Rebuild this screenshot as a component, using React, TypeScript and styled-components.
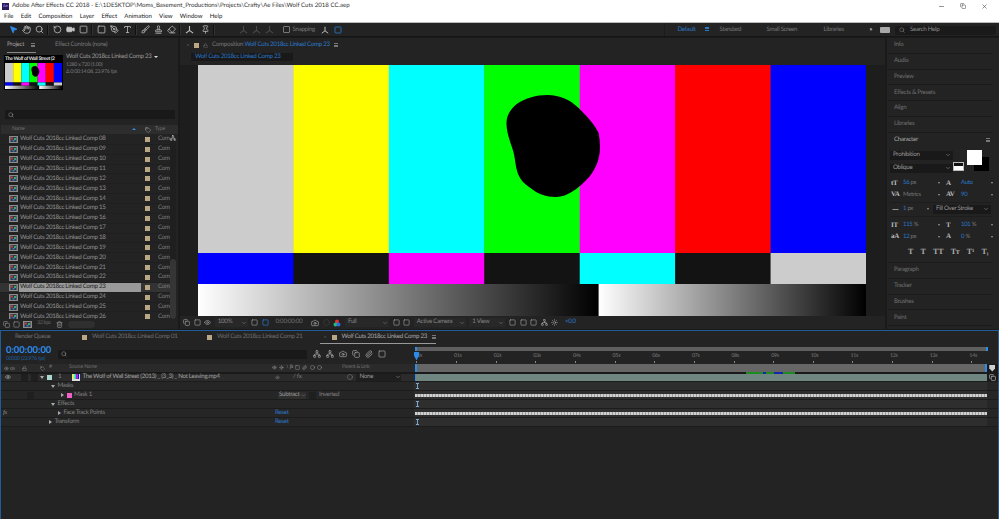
import { useId } from "react";
import styled, { createGlobalStyle } from "styled-components";
import {
  Brush,
  Camera,
  ChevronDown,
  Circle,
  Eraser,
  Eye,
  Hand,
  Lock,
  MousePointer2,
  Paperclip,
  PenTool,
  Pin,
  RotateCcw,
  Search,
  Square,
  Stamp,
  Sun,
  Tag,
  Trash2,
  Type,
  Video,
  Volume2,
  X,
  Minus,
  Copy,
  Network,
} from "lucide-react";

const BLUE = "#2d8ceb";
const LINK = "#2a78c8";
const TEXT = "#8f8f8f";

const GlobalStyle = createGlobalStyle`
  html, body {
    margin: 0;
    padding: 0;
    background: #1a1a1a;
    overflow: hidden;
  }
  * { box-sizing: border-box; }
`;

const Page = styled.div`
  width: 999px;
  height: 519px;
  display: flex;
  flex-direction: column;
  overflow: hidden;
  background: #1a1a1a;
  color: ${TEXT};
  font-family: Lato, "Open Sans", sans-serif;
  font-size: 6.2px;
  letter-spacing: -0.3px;
  line-height: 1;
  white-space: nowrap;
  text-rendering: geometricPrecision;
`;

/* window chrome */
const TitleBar = styled.div`
  height: 12px;
  background: #fff;
  display: flex;
  align-items: center;
  padding-left: 2px;
  color: #333;
  font-size: 6.1px;
  letter-spacing: normal;
  gap: 3px;
`;

const AppLogo = styled.div`
  width: 7px;
  height: 7px;
  background: #2a1a5e;
  color: #b9a2ff;
  font-size: 4px;
  display: flex;
  align-items: center;
  justify-content: center;
`;

const WindowButtons = styled.div`
  margin-left: auto;
  display: flex;
  gap: 15px;
  padding-right: 11px;
  color: #444;
`;

const MenuBar = styled.div`
  height: 11px;
  background: #fff;
  display: flex;
  gap: 7.2px;
  align-items: center;
  padding-left: 4px;
  color: #222;
  font-size: 6.1px;
  letter-spacing: normal;
  border-bottom: 1px solid #bbb;
`;

const Toolbar = styled.div`
  height: 14px;
  background: #232323;
  border-bottom: 1px solid #151515;
  display: flex;
  align-items: center;
  padding-left: 6.5px;
  flex-shrink: 0;
`;

const ToolButton = styled.div<{ $active?: boolean; $dim?: boolean; $gap?: number }>`
  width: 13px;
  height: 13px;
  margin-left: ${(p) => p.$gap ?? 0}px;
  display: flex;
  align-items: center;
  justify-content: center;
  color: ${(p) => (p.$active ? BLUE : p.$dim ? "#4a4a4a" : "#c4c4c4")};
`;

const ToolSeparator = styled.div`
  width: 2px;
  height: 10px;
  margin: 0 1.5px;
  border-left: 1px solid #111;
  border-right: 1px solid #333;
`;

const SnapBox = styled.div`
  width: 7px;
  height: 7px;
  border: 1px solid #777;
  border-radius: 1px;
  margin: 0 3px 0 7px;
`;

const SnapLabel = styled.span`
  width: 24px;
  padding-top: 1px;
  color: #777;
`;

const WorkspaceSwitch = styled.div`
  margin-left: auto;
  height: 100%;
  display: flex;
  align-items: center;
  border-left: 1px solid #1c1c1c;
  padding: 1px 0 0 12px;
`;

const WorkspaceItem = styled.span<{ $active?: boolean; $width: number }>`
  width: ${(p) => p.$width}px;
  color: ${(p) => (p.$active ? LINK : "#777")};
`;

const MoreArrows = styled.span`
  color: #ccc;
  font-weight: 700;
`;

const MenuLines = styled.span<{ $color?: string }>`
  display: inline-block;
  width: 4px;
  height: 4px;
  flex-shrink: 0;
  border-top: 1px solid ${(p) => p.$color || "#777"};
  border-bottom: 1px solid ${(p) => p.$color || "#777"};
  position: relative;
  &::after {
    content: "";
    position: absolute;
    left: 0;
    right: 0;
    top: 0.5px;
    height: 1px;
    background: ${(p) => p.$color || "#777"};
  }
`;

const SearchHelp = styled.div`
  width: 101px;
  height: 9px;
  margin: 0 3px 0 5px;
  background: #1a1a1a;
  border-radius: 2px;
  display: flex;
  align-items: center;
  gap: 5px;
  padding-left: 4px;
  color: #8a8a8a;
`;

const KeyIcon = styled.div`
  width: 10px;
  height: 6px;
  background: #a8a8a8;
  border-radius: 1px;
  margin-left: 8px;
`;

/* panels */
const Workspace = styled.div`
  flex: 1;
  display: flex;
  gap: 2px;
  padding: 1px 0;
  min-height: 0;
`;

const Panel = styled.div<{ $width: number }>`
  width: ${(p) => p.$width}px;
  flex-shrink: 0;
  background: #232323;
  display: flex;
  flex-direction: column;
  overflow: hidden;
`;

const PanelTabs = styled.div`
  height: 15px;
  flex-shrink: 0;
  display: flex;
  align-items: center;
  color: #777;
`;

const ProjectTab = styled.div`
  display: flex;
  align-items: center;
  gap: 7px;
  height: 100%;
  margin-left: 7px;
  width: 29px;
  color: #a0a0a0;
  border-bottom: 1px solid #8a8a8a;
`;

const EffectTab = styled.span`
  margin-left: 19px;
`;

const PreviewBlock = styled.div`
  display: flex;
  gap: 3px;
  padding: 2px 0 0 4px;
  height: 57px;
  flex-shrink: 0;
`;

const Thumb = styled.div`
  width: 59px;
  height: 35px;
  background: #000;
  padding: 0 1px;
  display: flex;
  flex-direction: column;
  overflow: hidden;
`;

const ThumbName = styled.div`
  height: 8px;
  color: #e0e0e0;
  font-size: 5px;
  font-weight: 700;
  padding: 2px 0 0 0;
  overflow: hidden;
`;

const CompInfo = styled.div`
  display: flex;
  flex-direction: column;
  gap: 2px;
  margin-top: -1px;
  color: #7c7c7c;
  font-size: 5.3px;
`;

const CompInfoTitle = styled.div`
  display: flex;
  align-items: center;
  gap: 3px;
  color: #999;
  font-size: 6.2px;
  margin-bottom: 0.5px;
`;

const TriangleDown = styled.span`
  border-left: 2px solid transparent;
  border-right: 2px solid transparent;
  border-top: 2px solid #ddd;
`;

const SearchBox = styled.div`
  margin: 0 3px 0 5px;
  height: 9px;
  flex-shrink: 0;
  background: #191919;
  display: flex;
  align-items: center;
  padding-left: 3px;
  color: #999;
`;

const ListHeader = styled.div`
  height: 9px;
  margin-top: 6px;
  margin-left: 1px;
  flex-shrink: 0;
  background: #2d2d2d;
  display: grid;
  grid-template-columns: 11px 125px 8px 10px 1fr;
  align-items: center;
  color: #6f6f6f;
  font-size: 5.3px;
`;

const SortArrow = styled.span`
  justify-self: end;
  margin-right: 1px;
  border-left: 2.5px solid transparent;
  border-right: 2.5px solid transparent;
  border-bottom: 2.5px solid ${BLUE};
`;

const NameCell = styled.span`
  display: flex;
  justify-content: space-between;
  align-items: center;
`;

const ListArea = styled.div`
  flex: 1;
  min-height: 0;
  display: flex;
  padding-top: 1px;
  overflow: hidden;
`;

const Rows = styled.div`
  width: 170px;
`;

const ProjectRow = styled.div<{ $selected?: boolean }>`
  height: 9.87px;
  display: grid;
  grid-template-columns: 18px 126px 13px 1fr;
  align-items: center;
  padding-left: 1px;
  color: #919191;
  background: ${(p) => (p.$selected ? "#333" : "transparent")};
  border-bottom: 1px solid #1f1f1f;
`;

const ProjectName = styled.span<{ $selected?: boolean }>`
  height: 9px;
  margin-right: 4px;
  display: flex;
  align-items: center;
  padding-left: 1px;
  background: ${(p) => (p.$selected ? "#9a9a9a" : "transparent")};
  color: ${(p) => (p.$selected ? "#1c1c1c" : "inherit")};
`;

const IconCell = styled.span`
  padding-left: 8px;
  display: flex;
`;

const RowSwatch = styled.span`
  width: 5px;
  height: 5px;
  flex-shrink: 0;
  background: #b9a883;
`;

const TypeText = styled.span`
  color: #7c7c7c;
`;

const ScrollTrack = styled.div`
  width: 6px;
  display: flex;
  flex-direction: column;
  justify-content: space-between;
  align-items: center;
  background: #1f1f1f;
  color: #ccc;
`;

const ScrollThumb = styled.div`
  width: 100%;
  height: 60px;
  background: #353535;
  border-radius: 3px;
`;

const ProjectFooter = styled.div`
  height: 10px;
  flex-shrink: 0;
  display: flex;
  align-items: center;
  gap: 3px;
  padding-left: 3px;
  color: #999;
`;

const BpcBox = styled.div`
  width: 18px;
  color: #666;
  font-size: 5.3px;
  text-align: center;
`;

const FooterPill = styled.div`
  width: 27px;
  height: 7px;
  margin-left: 2px;
  background: #2f2f2f;
  border-radius: 4px;
`;

const CompHeader = styled.div`
  height: 14px;
  flex-shrink: 0;
  display: flex;
  align-items: center;
  gap: 4px;
  padding-left: 6px;
  color: #777;
`;

const BlueText = styled.span`
  color: ${LINK};
`;

const CompTabRow = styled.div`
  height: 13px;
  flex-shrink: 0;
  padding: 1px 0 0 11px;
`;

const CompTab = styled.div`
  width: 102px;
  height: 8px;
  background: #191919;
  color: ${LINK};
  display: flex;
  align-items: center;
  padding-left: 4px;
`;

const Viewer = styled.div`
  flex: 1;
  min-height: 0;
  padding: 0 19px 0 18px;
  background: #1d1d1d;
`;

const BarsSvg = styled.svg<{ $height: string }>`
  display: block;
  width: 100%;
  height: ${(p) => p.$height};
`;

const ViewerFooter = styled.div`
  height: 13px;
  flex-shrink: 0;
  display: flex;
  align-items: center;
  gap: 3.6px;
  padding-left: 3px;
  color: #aaa;
`;

const ViewerSelect = styled.div<{ $width: number }>`
  width: ${(p) => p.$width}px;
  height: 9px;
  display: flex;
  align-items: center;
  justify-content: space-between;
  padding: 0 1px 0 3px;
  background: #282828;
  color: #858585;
`;

const FooterText = styled.span<{ $color?: string; $width?: number }>`
  padding: 0 3px;
  width: ${(p) => (p.$width ? `${p.$width}px` : "auto")};
  color: ${(p) => p.$color || "#6f6f6f"};
`;

/* right column */
const DockRow = styled.div`
  height: 15.75px;
  flex-shrink: 0;
  margin: 0 6px 0 1px;
  padding-left: 6px;
  display: flex;
  align-items: center;
  color: #707070;
  border-bottom: 1px solid #1b1b1b;
`;

const CharacterPanel = styled.div`
  height: 130.5px;
  flex-shrink: 0;
  margin: 0 6px 0 1px;
  padding: 0 0 0 2px;
  border-bottom: 1px solid #1b1b1b;
  display: flex;
  flex-direction: column;
`;

const CharacterTitle = styled.div`
  height: 15px;
  padding: 0 3px 0 4px;
  display: flex;
  align-items: center;
  justify-content: space-between;
  color: #a5a5a5;
`;

const FontPickers = styled.div`
  display: grid;
  grid-template-columns: 63px 1fr;
  height: 27px;
  margin-top: 1px;
`;

const PickerStack = styled.div`
  display: flex;
  flex-direction: column;
  gap: 4px;
  padding-top: 2px;
`;

const FontSelect = styled.div`
  height: 9px;
  display: flex;
  align-items: center;
  justify-content: space-between;
  padding: 0 2px 0 3px;
  background: #191919;
  color: #9a9a9a;
`;

const ColorWells = styled.div`
  position: relative;
`;

const WhiteWell = styled.div`
  position: absolute;
  left: 14px;
  top: 1px;
  width: 15px;
  height: 15px;
  background: #fff;
  z-index: 1;
`;

const BlackWell = styled.div`
  position: absolute;
  left: 21px;
  top: 8px;
  width: 15px;
  height: 14px;
  background: #000;
`;

const StrokeWell = styled.div`
  position: absolute;
  left: 0;
  top: 13px;
  width: 11px;
  height: 9px;
  background: linear-gradient(#111 0 50%, #fff 50%);
  border: 1px solid #bbb;
`;

const ValueGrid = styled.div`
  display: grid;
  grid-template-columns: 12px 29px 14px 15px 27px 8px;
  align-items: center;
  grid-auto-rows: 11.5px;
  padding-left: 1px;
  font-size: 6px;
  color: #777;
`;

const TopValues = styled(ValueGrid)`
  margin-top: 2px;
`;

const LowerValues = styled(ValueGrid)`
  margin-top: 2px;
`;

const StrokeRow = styled.div`
  height: 15px;
  margin: 1px 0;
  display: flex;
  align-items: center;
  padding-left: 1px;
  font-size: 6px;
  color: #777;
  border-top: 1px solid #1d1d1d;
  border-bottom: 1px solid #1d1d1d;
`;

const StrokeValue = styled.span`
  margin-left: 3px;
  width: 24px;
`;

const StrokeSelect = styled(FontSelect)`
  width: 58px;
  margin-left: 4px;
  font-size: 6.2px;
`;

const GlyphIcon = styled.span`
  font-family: "Liberation Serif", serif;
  color: #bdbdbd;
  font-size: 7px;
  font-weight: 700;
`;

const BlueValue = styled.span`
  color: ${LINK};
`;

const Caret = styled.span`
  justify-self: center;
  border-left: 1.5px solid transparent;
  border-right: 1.5px solid transparent;
  border-top: 2px solid #999;
  width: 0;
`;

const TextStyleRow = styled.div`
  display: flex;
  align-items: center;
  gap: 7.5px;
  padding: 5px 0 0 18px;
  font-family: "Liberation Serif", serif;
  font-size: 8px;
  font-weight: 700;
  color: #a8a8a8;
`;

/* timeline */
const Timeline = styled.div`
  height: 189px;
  flex-shrink: 0;
  display: flex;
  flex-direction: column;
  background: #232323;
  border-top: 1px solid #1f5c99;
  border-left: 1.5px solid #1f5c99;
  border-right: 1.5px solid #1f5c99;
`;

const TimelineTabs = styled.div`
  height: 13px;
  flex-shrink: 0;
  display: flex;
  align-items: center;
  color: #6e6e6e;
`;

const TimelineTab = styled.div<{ $width: number; $active?: boolean; $inset?: number }>`
  width: ${(p) => p.$width}px;
  height: 100%;
  display: flex;
  align-items: center;
  gap: 5px;
  padding-left: ${(p) => p.$inset ?? 4}px;
  color: ${(p) => (p.$active ? "#a8a8a8" : "#6e6e6e")};
  border-bottom: ${(p) => (p.$active ? "1px solid #999" : "none")};
`;

const TimeControls = styled.div`
  height: 20px;
  flex-shrink: 0;
  display: grid;
  grid-template-columns: 412.5px 1fr;
`;

const TimeLeft = styled.div`
  display: flex;
  align-items: center;
  padding-left: 5px;
`;

const TimeCode = styled.div`
  width: 52px;
  display: flex;
  flex-direction: column;
  gap: 2px;
`;

const TimeBig = styled.div`
  color: ${BLUE};
  font-size: 9.4px;
  font-weight: 700;
  letter-spacing: normal;
`;

const TimeSmall = styled.div`
  color: #1f5f9f;
  font-size: 5.3px;
`;

const LayerSearch = styled.div`
  width: 249px;
  height: 9px;
  background: #191919;
  display: flex;
  align-items: center;
  padding-left: 3px;
  color: #999;
`;

const TimeTools = styled.div`
  display: flex;
  gap: 5px;
  padding-left: 6px;
  color: #aaa;
`;

const RulerArea = styled.div`
  position: relative;
  display: flex;
  flex-direction: column;
  overflow: hidden;
`;

const NavBar = styled.div`
  height: 4px;
  margin: 3px 10px 0 1px;
  background: #5f5f5f;
  border-left: 2px solid ${BLUE};
  border-right: 2px solid ${BLUE};
`;

const Ruler = styled.div`
  display: flex;
  padding: 3px 0 0 2.9px;
`;

const RulerCell = styled.div`
  width: 39.65px;
  flex-shrink: 0;
  display: flex;
  flex-direction: column;
  gap: 1.5px;
  color: #7a7a7a;
  font-size: 5.3px;
`;

const RulerLabel = styled.span`
  margin-left: -2px;
`;

const RulerTick = styled.span`
  width: 1px;
  height: 2px;
  background: #888;
`;

const Playhead = styled.div`
  position: absolute;
  left: 0.5px;
  top: 8px;
  width: 5px;
  height: 8px;
  background: ${BLUE};
  clip-path: polygon(0 0, 100% 0, 100% 45%, 55% 100%, 45% 100%, 0 45%);
`;

const ColumnHeader = styled.div`
  height: 8px;
  flex-shrink: 0;
  display: grid;
  grid-template-columns: 412.5px 1fr 11.5px;
  background: #2a2a2a;
  color: #6b6b6b;
  font-size: 5.3px;
`;

const HeaderLeft = styled.div`
  display: flex;
  align-items: center;
  padding-left: 3px;
  color: #9a9a9a;
  gap: 1px;
`;

const HeaderLabel = styled.span<{ $width: number }>`
  width: ${(p) => p.$width}px;
  flex-shrink: 0;
  color: #6b6b6b;
`;

const SwitchIcons = styled.span`
  width: 69px;
  flex-shrink: 0;
  display: flex;
  align-items: center;
  gap: 2.2px;
  color: #a5a5a5;
  font-style: italic;
  font-family: "Liberation Serif", serif;
`;

const WorkBar = styled.div`
  height: 8px;
  margin-left: 1px;
  background: #666;
  border-left: 2px solid ${BLUE};
  border-right: 2px solid ${BLUE};
`;

const EndCell = styled.div`
  display: flex;
  align-items: center;
  justify-content: center;
  color: #ccc;
  background: #1a1a1a;
`;

const ShieldIcon = styled.span`
  width: 6px;
  height: 7px;
  background: #d0d0d0;
  clip-path: polygon(0 0, 100% 0, 100% 55%, 50% 100%, 0 55%);
`;

const MotionTrack = styled.div`
  height: 1.5px;
  flex-shrink: 0;
  display: flex;
  padding-left: 745px;
  background: #1a1a1a;
`;

const MotionMark = styled.span<{ $width: number; $color: string }>`
  width: ${(p) => p.$width}px;
  background: ${(p) => p.$color};
`;

const TimelineRow = styled.div<{ $layer?: boolean }>`
  height: 8.9px;
  flex-shrink: 0;
  display: grid;
  grid-template-columns: 412.5px 1fr 11.5px;
  align-items: center;
  background: ${(p) => (p.$layer ? "#2b2b2b" : "#262626")};
  border-bottom: 1px solid #1c1c1c;
  color: #808080;
`;

const RowLeft = styled.div<{ $indent: number }>`
  display: grid;
  grid-template-columns: ${(p) => 274 - p.$indent}px 1fr;
  padding-left: ${(p) => p.$indent}px;
  align-items: center;
  height: 100%;
`;

const RowName = styled.div`
  display: flex;
  align-items: center;
  gap: 2.5px;
`;

const Twirl = styled.span<{ $open?: boolean }>`
  width: 0;
  height: 0;
  flex-shrink: 0;
  ${(p) =>
    p.$open
      ? "border-left: 2px solid transparent; border-right: 2px solid transparent; border-top: 3px solid #aaa;"
      : "border-top: 2px solid transparent; border-bottom: 2px solid transparent; border-left: 3px solid #aaa;"}
`;

const LayerSwatch = styled.span<{ $color: string }>`
  width: 5px;
  height: 5px;
  flex-shrink: 0;
  background: ${(p) => p.$color};
`;

const Spacer = styled.span<{ $width: number }>`
  width: ${(p) => p.$width}px;
  flex-shrink: 0;
`;

const FxMark = styled.span`
  width: 6px;
  flex-shrink: 0;
  font-family: "Liberation Serif", serif;
  font-style: italic;
  color: #999;
`;

const LayerNumber = styled.span`
  width: 15.5px;
  padding-left: 4px;
  flex-shrink: 0;
`;

const LayerName = styled.span`
  color: #a0a0a0;
`;

const RowControls = styled.div`
  display: flex;
  align-items: center;
  gap: 3px;
`;

const ResetLink = styled.span`
  color: ${LINK};
`;

const SubtractBox = styled.span`
  width: 28px;
  height: 7px;
  margin-left: 3px;
  display: flex;
  align-items: center;
  justify-content: space-between;
  padding-left: 1px;
  background: #2f2f2f;
  color: #9a9a9a;
`;

const CheckBox = styled.span`
  width: 7px;
  height: 7px;
  flex-shrink: 0;
  background: #1f1f1f;
`;

const ParentSelect = styled.span`
  width: 45px;
  height: 7px;
  padding-left: 3px;
  display: flex;
  align-items: center;
  justify-content: space-between;
  background: #1f1f1f;
  color: #9a9a9a;
`;

const TrackCell = styled.div`
  height: 100%;
  padding-left: 1px;
  display: flex;
  align-items: center;
  background: #2e2e2e;
`;

const LayerBar = styled.div`
  width: 100%;
  height: 100%;
  background: #708680;
  border-left: 1px solid ${BLUE};
`;

const WaveLine = styled.div`
  width: 100%;
  height: 3px;
  background: repeating-linear-gradient(90deg, #d0d0d0 0 2px, #9c9c9c 2px 3px);
`;

const BarTick = styled.div`
  width: 3px;
  height: 6px;
  margin-left: 1px;
  border-top: 1px solid #7da4cc;
  border-bottom: 1px solid #7da4cc;
  background: linear-gradient(90deg, transparent 0 33%, #7da4cc 33% 66%, transparent 66%);
`;

const EmptyTimeline = styled.div`
  flex: 1;
  background: #232323;
`;

const barColors = ["#cccccc", "#ffff00", "#00ffff", "#00ff00", "#ff00ff", "#ff0000", "#0000ff"];
const midColors = ["#0000ff", "#131313", "#ff00ff", "#131313", "#00ffff", "#131313", "#cccccc"];

// the picture in the comp viewer and its thumbnail, drawn in a 667x251 box
const ColorBars = ({ height }: { height: string }) => {
  const id = useId();
  const w = 667 / 7;
  return (
    <BarsSvg $height={height} viewBox="0 0 667 251" preserveAspectRatio="none">
      <defs>
        <linearGradient id={id}>
          <stop offset="0" stopColor="#fff" />
          <stop offset="1" stopColor="#000" />
        </linearGradient>
      </defs>
      <rect width="667" height="251" fill="#000" />
      {barColors.map((c, i) => (
        <rect key={i} x={i * w} width={w + 0.5} height="188" fill={c} />
      ))}
      {midColors.map((c, i) => (
        <rect key={i} x={i * w} y="188" width={w + 0.5} height="31" fill={c} />
      ))}
      <rect y="219" width="400" height="32" fill={`url(#${id})`} />
      <rect x="400" y="219" width="267" height="32" fill={`url(#${id})`} />
      <path
        d="M349 30C361 30 372 35 380 43C388 51 396 59 400 68C402 78 402 88 399 97C395 108 388 116 380 122C373 128 365 132 357 132C348 132 339 129 332 123C326 119 322 115 320 110C317 103 317 95 315 87C312 77 308 68 308 58C308 50 312 45 317 40C326 33 338 30 349 30Z"
        fill="#000"
      />
    </BarsSvg>
  );
};

const CompIcon = () => (
  <svg width="9" height="7" viewBox="0 0 9 7">
    <rect width="9" height="7" fill="#8b8b8b" />
    <rect x="1.5" y="1" width="6" height="5" fill="#2b3a44" />
    <rect x="2" y="1.5" width="2" height="2" fill="#c33" />
    <rect x="5" y="2" width="2" height="2" fill="#3a7" />
    <rect x="3.5" y="4" width="2" height="1.5" fill="#47c" />
  </svg>
);

const FootageIcon = () => (
  <svg width="8" height="7" viewBox="0 0 8 7">
    <rect width="8" height="7" fill="#ddd" />
    <rect x="1" width="1.5" height="5" fill="#ee0" />
    <rect x="2.5" width="1.5" height="5" fill="#0dd" />
    <rect x="4" width="1.5" height="5" fill="#d0d" />
    <rect x="5.5" width="1.5" height="5" fill="#11d" />
  </svg>
);

// three local axis arms from the toolbar
const AxisIcon = ({ size = 9 }: { size?: number }) => (
  <svg width={size} height={size} viewBox="0 0 10 10" fill="none" stroke="currentColor" strokeWidth="1.2">
    <path d="M5 1V6L1 9M5 6L9 9" />
  </svg>
);

const RgbIcon = () => (
  <svg width="8" height="8" viewBox="0 0 8 8">
    <circle cx="4" cy="2.5" r="2" fill="#d33" />
    <circle cx="2.5" cy="5.5" r="2" fill="#2b7" />
    <circle cx="5.5" cy="5.5" r="2" fill="#36d" />
  </svg>
);

const comps = [8, 9, 10, 11, 12, 13, 14, 15, 16, 17, 18, 19, 20, 21, 22, 23, 24, 25, 26];
const rulerLabels = ["00s", "01s", "02s", "03s", "04s", "05s", "06s", "07s", "08s", "09s", "10s", "11s", "12s", "13s", "14s"];
const dockTop = ["Info", "Audio", "Preview", "Effects & Presets", "Align", "Libraries"];
const dockBottom = ["Paragraph", "Tracker", "Brushes", "Paint"];

const ProjectPanel = () => (
  <Panel $width={178}>
    <PanelTabs>
      <ProjectTab>
        Project <MenuLines />
      </ProjectTab>
      <EffectTab>Effect Controls (none)</EffectTab>
    </PanelTabs>
    <PreviewBlock>
      <Thumb>
        <ThumbName>The Wolf of Wall Street (2</ThumbName>
        <ColorBars height="26px" />
      </Thumb>
      <CompInfo>
        <CompInfoTitle>
          Wolf Cuts 2018cc Linked Comp 23 <TriangleDown />
        </CompInfoTitle>
        <span>1280 x 720 (1.00)</span>
        <span>Δ 0:00:14:08, 23.976 fps</span>
      </CompInfo>
    </PreviewBlock>
    <SearchBox>
      <Search size={6} />
    </SearchBox>
    <ListHeader>
      <span />
      <NameCell>
        Name <SortArrow />
      </NameCell>
      <span />
      <Tag size={6} color="#aaa" />
      <span>Type</span>
    </ListHeader>
    <ListArea>
      <Rows>
        {comps.map((n) => {
          const selected = n === 23;
          return (
            <ProjectRow key={n} $selected={selected}>
              <IconCell>
                <CompIcon />
              </IconCell>
              <ProjectName $selected={selected}>
                Wolf Cuts 2018cc Linked Comp {String(n).padStart(2, "0")}
              </ProjectName>
              <RowSwatch />
              <TypeText>Com</TypeText>
            </ProjectRow>
          );
        })}
      </Rows>
      <ScrollTrack>
        <Network size={6} />
        <ScrollThumb />
      </ScrollTrack>
    </ListArea>
    <ProjectFooter>
      <Copy size={7} />
      <Square size={7} />
      <CompIcon />
      <BpcBox>32 bpc</BpcBox>
      <Trash2 size={7} />
      <FooterPill />
    </ProjectFooter>
  </Panel>
);

const CompPanel = () => (
  <Panel $width={705}>
    <CompHeader>
      <X size={4} />
      <RowSwatch />
      <Lock size={5} />
      <span>
        Composition <BlueText>Wolf Cuts 2018cc Linked Comp 23</BlueText>
      </span>
      <MenuLines />
    </CompHeader>
    <CompTabRow>
      <CompTab>Wolf Cuts 2018cc Linked Comp 23</CompTab>
    </CompTabRow>
    <Viewer>
      <ColorBars height="251px" />
    </Viewer>
    <ViewerFooter>
      <Copy size={7} />
      <Square size={7} />
      <Eye size={7} />
      <ViewerSelect $width={33}>
        100% <ChevronDown size={6} />
      </ViewerSelect>
      <Square size={7} />
      <Square size={7} color={BLUE} />
      <FooterText $width={35}>0:00:00:00</FooterText>
      <Camera size={8} />
      <Circle size={7} color="#444" />
      <RgbIcon />
      <ViewerSelect $width={44}>
        Full <ChevronDown size={6} />
      </ViewerSelect>
      <Square size={7} />
      <Square size={7} />
      <ViewerSelect $width={52}>
        Active Camera <ChevronDown size={6} />
      </ViewerSelect>
      <ViewerSelect $width={36}>
        1 View <ChevronDown size={6} />
      </ViewerSelect>
      <Square size={7} />
      <Square size={7} />
      <Square size={7} />
      <Network size={7} />
      <Sun size={7} />
      <FooterText $color={LINK}>+0.0</FooterText>
    </ViewerFooter>
  </Panel>
);

const CharacterSection = () => (
  <CharacterPanel>
    <CharacterTitle>
      Character <MenuLines />
    </CharacterTitle>
    <FontPickers>
      <PickerStack>
        <FontSelect>
          Prohibition <ChevronDown size={6} />
        </FontSelect>
        <FontSelect>
          Oblique <ChevronDown size={6} />
        </FontSelect>
      </PickerStack>
      <ColorWells>
        <StrokeWell />
        <WhiteWell />
        <BlackWell />
      </ColorWells>
    </FontPickers>
    <TopValues>
      <GlyphIcon>tT</GlyphIcon>
      <span>
        <BlueValue>56</BlueValue> px
      </span>
      <Caret />
      <GlyphIcon>A</GlyphIcon>
      <BlueValue>Auto</BlueValue>
      <Caret />
      <GlyphIcon>VA</GlyphIcon>
      <span>Metrics</span>
      <Caret />
      <GlyphIcon>AV</GlyphIcon>
      <BlueValue>90</BlueValue>
      <Caret />
    </TopValues>
    <StrokeRow>
      <Minus size={9} color="#bbb" />
      <StrokeValue>
        <BlueValue>1</BlueValue> px
      </StrokeValue>
      <Caret />
      <StrokeSelect>
        Fill Over Stroke <ChevronDown size={6} />
      </StrokeSelect>
    </StrokeRow>
    <LowerValues>
      <GlyphIcon>IT</GlyphIcon>
      <span>
        <BlueValue>115</BlueValue> %
      </span>
      <Caret />
      <GlyphIcon>T</GlyphIcon>
      <span>
        <BlueValue>101</BlueValue> %
      </span>
      <Caret />
      <GlyphIcon>aA</GlyphIcon>
      <span>
        <BlueValue>12</BlueValue> px
      </span>
      <Caret />
      <GlyphIcon>A</GlyphIcon>
      <span>
        <BlueValue>0</BlueValue> %
      </span>
      <Caret />
    </LowerValues>
    <TextStyleRow>
      <span>T</span>
      <span>T</span>
      <span>TT</span>
      <span>Tт</span>
      <span>T¹</span>
      <span>T₁</span>
    </TextStyleRow>
  </CharacterPanel>
);

const DockPanel = () => (
  <Panel $width={112}>
    {dockTop.map((name) => (
      <DockRow key={name}>{name}</DockRow>
    ))}
    <CharacterSection />
    {dockBottom.map((name) => (
      <DockRow key={name}>{name}</DockRow>
    ))}
  </Panel>
);

const TimelinePanel = () => (
  <Timeline>
    <TimelineTabs>
      <TimelineTab $width={77} $inset={14}>
        Render Queue
      </TimelineTab>
      <TimelineTab $width={125}>
        <RowSwatch /> Wolf Cuts 2018cc Linked Comp 01
      </TimelineTab>
      <TimelineTab $width={117}>
        <RowSwatch /> Wolf Cuts 2018cc Linked Comp 21
      </TimelineTab>
      <TimelineTab $width={116} $active>
        <X size={4} />
        <RowSwatch /> Wolf Cuts 2018cc Linked Comp 23 <MenuLines />
      </TimelineTab>
    </TimelineTabs>
    <TimeControls>
      <TimeLeft>
        <TimeCode>
          <TimeBig>0:00:00:00</TimeBig>
          <TimeSmall>00000 (23.976 fps)</TimeSmall>
        </TimeCode>
        <LayerSearch>
          <Search size={6} />
        </LayerSearch>
        <TimeTools>
          <Network size={8} />
          <Network size={8} />
          <Camera size={8} />
          <Copy size={8} />
          <Paperclip size={8} />
          <Square size={8} />
        </TimeTools>
      </TimeLeft>
      <RulerArea>
        <NavBar />
        <Ruler>
          {rulerLabels.map((label) => (
            <RulerCell key={label}>
              <RulerLabel>{label}</RulerLabel>
              <RulerTick />
            </RulerCell>
          ))}
        </Ruler>
        <Playhead />
      </RulerArea>
    </TimeControls>
    <ColumnHeader>
      <HeaderLeft>
        <Eye size={5} />
        <Volume2 size={5} />
        <Spacer $width={5} />
        <Lock size={5} />
        <Spacer $width={11} />
        <Tag size={5} />
        <Spacer $width={2} />
        <HeaderLabel $width={19}>#</HeaderLabel>
        <HeaderLabel $width={202}>Source Name</HeaderLabel>
        <SwitchIcons>
          <Eye size={5} />
          <Sun size={5} />
          <span>\</span>
          <span>fx</span>
          <Square size={5} />
          <Paperclip size={5} />
          <Circle size={5} />
          <Circle size={5} />
        </SwitchIcons>
        <HeaderLabel $width={60}>Parent &amp; Link</HeaderLabel>
      </HeaderLeft>
      <WorkBar />
      <EndCell>
        <ShieldIcon />
      </EndCell>
    </ColumnHeader>
    <MotionTrack>
      <MotionMark $width={17} $color="#1c8c22" />
      <MotionMark $width={3} $color="#1526a8" />
      <MotionMark $width={8} $color="#1c8c22" />
      <MotionMark $width={2} $color="#1526a8" />
      <MotionMark $width={7} $color="#1526a8" />
      <MotionMark $width={12} $color="#1c8c22" />
    </MotionTrack>
    <TimelineRow $layer>
      <RowLeft $indent={4}>
        <RowName>
          <Eye size={6} color="#bbb" />
          <Spacer $width={5} />
          <CheckBox />
          <CheckBox />
          <Twirl $open />
          <LayerSwatch $color="#a8d8d0" />
          <LayerNumber>1</LayerNumber>
          <FootageIcon />
          <LayerName>The Wolf of Wall Street (2013) _ (3_3) _ Not Leaving.mp4</LayerName>
        </RowName>
        <RowControls>
          <Eye size={5} />
          <Spacer $width={7} />/ fx
          <Spacer $width={40} />
          <Circle size={6} />
          <ParentSelect>
            None <ChevronDown size={6} />
          </ParentSelect>
        </RowControls>
      </RowLeft>
      <TrackCell>
        <LayerBar />
      </TrackCell>
      <EndCell>
        <Copy size={7} />
      </EndCell>
    </TimelineRow>
    <TimelineRow>
      <RowLeft $indent={50}>
        <RowName>
          <Twirl $open /> Masks
        </RowName>
      </RowLeft>
      <TrackCell>
        <BarTick />
      </TrackCell>
    </TimelineRow>
    <TimelineRow>
      <RowLeft $indent={26}>
        <RowName>
          <CheckBox />
          <Spacer $width={22} />
          <Twirl /> <LayerSwatch $color="#f060c8" /> Mask 1
        </RowName>
        <RowControls>
          <SubtractBox>
            Subtract <ChevronDown size={5} />
          </SubtractBox>
          <CheckBox />
          <span>Inverted</span>
        </RowControls>
      </RowLeft>
      <TrackCell>
        <WaveLine />
      </TrackCell>
    </TimelineRow>
    <TimelineRow>
      <RowLeft $indent={50}>
        <RowName>
          <Twirl $open /> Effects
        </RowName>
      </RowLeft>
      <TrackCell>
        <BarTick />
      </TrackCell>
    </TimelineRow>
    <TimelineRow>
      <RowLeft $indent={2}>
        <RowName>
          <FxMark>fx</FxMark>
          <Spacer $width={44} />
          <Twirl /> Face Track Points
        </RowName>
        <ResetLink>Reset</ResetLink>
      </RowLeft>
      <TrackCell>
        <WaveLine />
      </TrackCell>
    </TimelineRow>
    <TimelineRow>
      <RowLeft $indent={48}>
        <RowName>
          <Twirl /> Transform
        </RowName>
        <ResetLink>Reset</ResetLink>
      </RowLeft>
      <TrackCell>
        <BarTick />
      </TrackCell>
    </TimelineRow>
    <EmptyTimeline />
  </Timeline>
);

const App = () => (
  <Page>
    <GlobalStyle />
    <TitleBar>
      <AppLogo>Ae</AppLogo>
      Adobe After Effects CC 2018 - E:\1DESKTOP\Moms_Basement_Productions\Projects\Crafty\Ae Files\Wolf Cuts 2018 CC.aep
      <WindowButtons>
        <Minus size={7} />
        <Copy size={6} />
        <X size={7} />
      </WindowButtons>
    </TitleBar>
    <MenuBar>
      {["File", "Edit", "Composition", "Layer", "Effect", "Animation", "View", "Window", "Help"].map((m) => (
        <span key={m}>{m}</span>
      ))}
    </MenuBar>
    <Toolbar>
      <ToolButton $active>
        <MousePointer2 size={9} fill={BLUE} />
      </ToolButton>
      <ToolButton>
        <Hand size={9} />
      </ToolButton>
      <ToolButton>
        <Search size={9} />
      </ToolButton>
      <ToolSeparator />
      <ToolButton>
        <RotateCcw size={9} />
      </ToolButton>
      <ToolButton>
        <Video size={9} fill="#c4c4c4" />
      </ToolButton>
      <ToolButton>
        <Square size={9} strokeDasharray="2 2" />
      </ToolButton>
      <ToolSeparator />
      <ToolButton>
        <Square size={9} />
      </ToolButton>
      <ToolButton>
        <PenTool size={9} />
      </ToolButton>
      <ToolButton>
        <Type size={9} />
      </ToolButton>
      <ToolSeparator />
      <ToolButton>
        <Brush size={9} />
      </ToolButton>
      <ToolButton>
        <Stamp size={9} />
      </ToolButton>
      <ToolButton>
        <Eraser size={9} />
      </ToolButton>
      <ToolSeparator />
      <ToolButton>
        <AxisIcon />
      </ToolButton>
      <ToolButton $gap={3}>
        <Pin size={9} />
      </ToolButton>
      <ToolSeparator />
      <Spacer $width={20} />
      <ToolButton $dim>
        <AxisIcon />
      </ToolButton>
      <ToolButton $dim>
        <AxisIcon />
      </ToolButton>
      <ToolButton $dim>
        <AxisIcon />
      </ToolButton>
      <SnapBox />
      <SnapLabel>Snapping</SnapLabel>
      <ToolButton $gap={2}>
        <AxisIcon size={8} />
      </ToolButton>
      <ToolButton $active>
        <Square size={8} strokeDasharray="2 2" />
      </ToolButton>
      <WorkspaceSwitch>
        <WorkspaceItem $active $width={28}>
          Default
        </WorkspaceItem>
        <WorkspaceItem $width={14}>
          <MenuLines $color={LINK} />
        </WorkspaceItem>
        <WorkspaceItem $width={47}>Standard</WorkspaceItem>
        <WorkspaceItem $width={57}>Small Screen</WorkspaceItem>
        <WorkspaceItem $width={46}>Libraries</WorkspaceItem>
        <MoreArrows>»</MoreArrows>
        <KeyIcon />
        <SearchHelp>
          <Search size={6} /> Search Help
        </SearchHelp>
      </WorkspaceSwitch>
    </Toolbar>
    <Workspace>
      <ProjectPanel />
      <CompPanel />
      <DockPanel />
    </Workspace>
    <TimelinePanel />
  </Page>
);

export default App;
